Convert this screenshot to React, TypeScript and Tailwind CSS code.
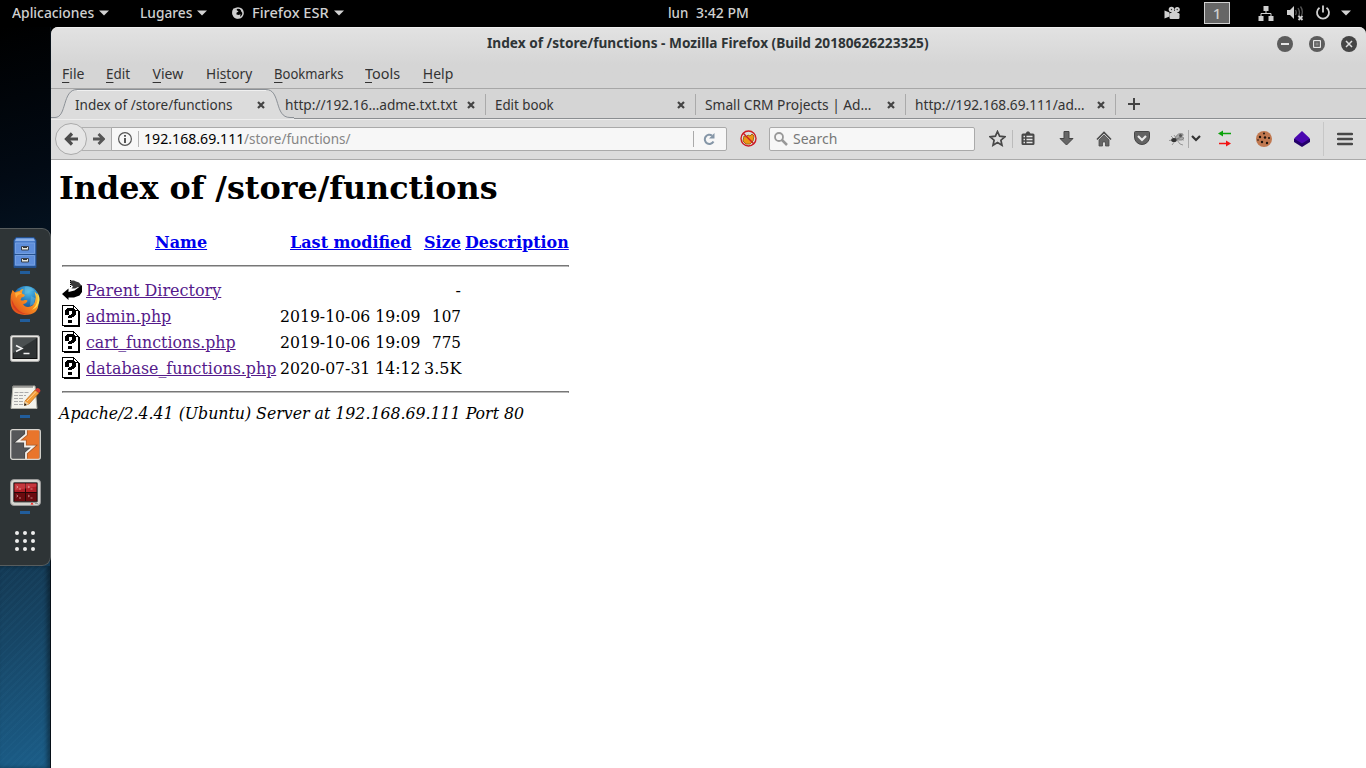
import { useLayoutEffect, useRef, useState } from "react";
import type { ReactNode } from "react";

/* A label condensed or widened to an exact advance width. */
function Label({ w, className = "", children }: { w: number; className?: string; children: ReactNode }) {
  const ref = useRef<HTMLSpanElement>(null);
  const [scale, setScale] = useState(1);
  useLayoutEffect(() => {
    if (ref.current) setScale(w / ref.current.offsetWidth);
  }, [w]);
  return (
    <span className="block shrink-0 whitespace-pre" style={{ width: w }}>
      <span ref={ref} className={`inline-block origin-left ${className}`} style={{ transform: `scaleX(${scale})` }}>
        {children}
      </span>
    </span>
  );
}

const Caret = () => (
  <svg width="10" height="6" viewBox="0 0 10 6" className="shrink-0">
    <path d="M0 .5h10L5 5.5z" fill="#d3d3d3" />
  </svg>
);

function TopBar() {
  return (
    <header className="flex h-[27px] shrink-0 items-center bg-black pb-px pl-3 text-[14px] leading-[20px] font-medium text-[#d0d0d0]">
      <Label w={82}>Aplicaciones</Label>
      <span className="ml-[5px]"><Caret /></span>
      <span className="ml-[31px]"><Label w={52}>Lugares</Label></span>
      <span className="ml-[5px]"><Caret /></span>
      <svg className="ml-[25px] shrink-0" width="12" height="12" viewBox="0 0 12 12">
        <circle cx="6" cy="6" r="5.1" fill="none" stroke="#d0d0d0" strokeWidth="1.5" />
        <path d="M.6 3 2 1l1 1.500L5.500 1 4.500 3l2 1.500-2 1.300v1.700l2.500.5 1.500-1L8 10 6 11.500C1 11.500 0 7 .6 3zM8 1l2.500 2 .5 3-1.500-1z" fill="#d0d0d0" />
      </svg>
      <span className="ml-2"><Label w={77}>Firefox ESR</Label></span>
      <span className="ml-[5px]"><Caret /></span>
      <span className="ml-[324px]"><Label w={20}>lun</Label></span>
      <span className="ml-2"><Label w={53}>3:42 PM</Label></span>
      <svg className="ml-[415px] shrink-0" width="17" height="14" viewBox="0 0 17 14">
        <g fill="#d0d0d0">
          <circle cx="7.5" cy="3.5" r="2.8" /><circle cx="13.2" cy="3.5" r="2.6" />
          <rect x="5.5" y="7" width="10" height="6" rx="1.2" /><path d="M7.500 5h6v3h-6zM.5 4.500v8L5.500 10.500v-4z" />
        </g>
        <g fill="#333"><circle cx="7.5" cy="3.5" r=".7" /><circle cx="13.2" cy="3.5" r=".7" /></g>
      </svg>
      <div className="ml-[23px] flex h-[22px] w-[26px] items-center justify-center border border-[#d0d0d0] bg-[#666]">
        <span className="text-[15px]">1</span>
      </div>
      <svg className="ml-7 shrink-0" width="16" height="16" viewBox="0 0 16 16">
        <path d="M5.5 1h5v5h-5zM.5 11h5v5h-5zM10.5 11h5v5h-5z" fill="#d0d0d0" />
        <path d="M8 6v2.5M3 11V8.5h10V11" fill="none" stroke="#d0d0d0" />
      </svg>
      <svg className="ml-3 shrink-0" width="18" height="16" viewBox="0 0 18 16">
        <path d="M1 5h3l4-4v13L4 10H1z" fill="#d0d0d0" />
        <path d="M9.5 5q1.5 2.5 0 5M12 3q3 4.500 0 9M14.500 1.500q3 4 1 9" fill="none" stroke="#555" strokeWidth="1.3" />
        <path d="m12.500 11 4 4m0-4-4 4" stroke="#d0d0d0" strokeWidth="1.8" />
      </svg>
      <svg className="ml-[11px] shrink-0" width="16" height="16" viewBox="0 0 16 16">
        <path d="M4.500 2.800a6 6 0 1 0 7 0" fill="none" stroke="#d0d0d0" strokeWidth="1.800" />
        <path d="M8 .5v7" stroke="#d0d0d0" strokeWidth="1.800" />
      </svg>
      <span className="ml-[10px]"><Caret /></span>
    </header>
  );
}

function Cabinet() {
  return (
    <svg width="24" height="31" viewBox="0 0 24 31">
      <path d="M3 .5h18l2 3v27H1v-27z" fill="#4a7cc9" stroke="#234f8c" />
      <path d="M3.500 1.500h17l1.500 2.500H2z" fill="#8ab0e8" />
      <path d="M2.500 6h19v10.500h-19zM2.500 18.500h19V28h-19z" fill="#5e8edb" stroke="#88aee9" strokeWidth=".6" />
      <path d="M1 17.500h22M1 29.500h22" stroke="#26528f" />
      <path d="M8.500 9.500h7v3.500h-7zM8.500 21.500h7V25h-7z" fill="#e6e6de" stroke="#38404c" />
      <path d="M10 10.500h4M10 22.500h4" stroke="#333" />
    </svg>
  );
}

function Firefox() {
  return (
    <svg width="31" height="31" viewBox="0 0 31 31">
      <defs>
        <radialGradient id="globe" cx=".6" cy=".2" r=".8"><stop stopColor="#53c2ee" /><stop offset=".5" stopColor="#2377b8" /><stop offset="1" stopColor="#12336e" /></radialGradient>
        <linearGradient id="fur" x1="1" y1="0" x2="0" y2="1"><stop stopColor="#ffe14d" /><stop offset=".45" stopColor="#f58a20" /><stop offset="1" stopColor="#d9401c" /></linearGradient>
      </defs>
      <circle cx="16" cy="14.500" r="13.500" fill="url(#globe)" />
      <path d="M15 2q6-1 9 4-4-1-5 2l-4 1zM21 11l4 2-1 6-4 2z" fill="#64b8db" opacity=".55" />
      <path d="M2.500 5 5 7.500q2-1.500 4.500-1.500Q11 4 13.500 4q-2 2-1.500 4.500l3 1.500q-.5 2-3.500 2.500l-1 2.500q2 1 4 0 3-.5 3 1-1.500 3-4.500 3 1.500 3 5 3 5.500-.5 7-5.500 1.500-5-.5-10 5 4 4 11Q29 30 14.500 30 0 29 .5 15q0-6 2-10z" fill="url(#fur)" />
      <path d="M1.500 14q0 9 7 13 5 3 11 2-8 0-12-5-4-4-6-10z" fill="#d93e20" />
      <path d="m5 8 4-1 3 1.500-4 1.500-2 3z" fill="#ffad3b" />
      <path d="M27 8q3 10-5 17 7-3 7.500-10 0-5-2.500-7z" fill="#ffdf50" />
    </svg>
  );
}

function Terminal() {
  return (
    <svg width="30" height="27" viewBox="0 0 30 27">
      <rect x=".5" y=".5" width="29" height="26" rx="2" fill="#e8e8e4" stroke="#aaa" />
      <rect x="3" y="3" width="24" height="20.500" fill="#2f3334" stroke="#111" />
      <path d="M3 3h24L3 18z" fill="#4b5051" />
      <path d="m6 10.500 6 3-6 3M13.500 18.500h6" fill="none" stroke="#f2f2f2" strokeWidth="1.500" />
    </svg>
  );
}

function Notes() {
  return (
    <svg width="31" height="26" viewBox="0 0 31 26">
      <path d="M3 2h22l2 22.500H1z" fill="#f3f3ec" stroke="#b0b0a8" />
      <path d="M4 1v3m2-3v3m2-3v3m2-3v3m2-3v3m2-3v3m2-3v3m2-3v3m2-3v3m2-3v3" stroke="#555" strokeWidth=".9" />
      <path d="M4.500 8.500h14M4 11.500h12M4 14.500h10M4 17.500h9M4 20.500h15" stroke="#aaa" strokeDasharray="4 1" />
      <path d="m15 17 10-11 4 3-10 11-4.500 1.500z" fill="#f39c35" stroke="#b66516" strokeWidth=".7" />
      <path d="m25 6 2-2q3 0 3.500 3L29 9z" fill="#d43e34" />
      <path d="m15 17-.8 4.700L19 20z" fill="#edcfa0" /><path d="m14.700 19-.6 2.800 2.600-.9z" fill="#111" />
      <path d="m17 17 9-9.500" stroke="#ffd09a" />
    </svg>
  );
}

function Burp() {
  return (
    <svg width="31" height="31" viewBox="0 0 31 31">
      <rect x=".7" y=".7" width="29.600" height="29.600" rx="2" fill="#555659" />
      <path d="M16 1h13.500v29H16v-6l7.500-6.500H15V12H7.500L16 5.500z" fill="#e9752b" />
      <path d="M16 1v4.500L7.500 12.500h7.500v5h8.500L16 24v6" fill="none" stroke="#222" strokeWidth="3.400" opacity=".35" />
      <path d="M16 1v4.500L7.500 12.500h7.500v5h8.500L16 24v6" fill="none" stroke="#f4f0ec" strokeWidth="1.800" />
      <rect x=".7" y=".7" width="29.600" height="29.600" rx="2" fill="none" stroke="#d8d5d0" strokeWidth="1.300" />
    </svg>
  );
}

function Terminator() {
  return (
    <svg width="31" height="27" viewBox="0 0 31 27">
      <rect x=".5" y=".5" width="30" height="26" rx="3.500" fill="#d6d6d0" stroke="#999" />
      <rect x="3.500" y="3.500" width="24" height="19.500" rx="1" fill="#260707" stroke="#555" />
      <path d="M4.500 4.500H15V13H4.500zM16 4.500h10.500V13H16z" fill="#b01f26" />
      <path d="M4.500 14H15v8H4.500zM16 14h10.500v8H16z" fill="#6b0a0e" />
      <path d="M4.500 4.500h22v3l-22 4z" fill="#e0555a" opacity=".45" />
      <path d="m6.500 7 1.500 1-1.500 1m2.500 1h2m7-3 1.500 1-1.500 1m2.500 1h2M6.500 16 8 17l-1.500 1M9 19h2m7-3 1.500 1-1.500 1m2.500 1h2" fill="none" stroke="#f3c9c9" strokeWidth=".6" />
      <path d="m20.500 25.500 1.500-2 1.500 2z" fill="#f00" /><path d="M25 24.500h3" stroke="#999" />
    </svg>
  );
}

const dock = [
  { icon: <Cabinet />, running: true },
  { icon: <Firefox />, running: true },
  { icon: <Terminal />, running: false },
  { icon: <Notes />, running: true },
  { icon: <Burp />, running: false },
  { icon: <Terminator />, running: true },
];

function Dock() {
  return (
    <aside className="flex w-[51px] shrink-0 flex-col border-r border-[#071018] bg-[linear-gradient(165deg,#000_0%,#020a14_20%,#08233a_50%,#153d59_75%,#1b5d88_100%)] pt-[201px]">
      <nav className="flex h-[338px] w-[51px] flex-col rounded-r-[9px] border border-l-0 border-[#585d5e] bg-[#2e3436]">
        {dock.map(({ icon, running }, i) => (
          <div key={i} className="flex h-12 shrink-0 flex-col items-center">
            <div className="flex h-[43px] items-center justify-center pt-[4px]">{icon}</div>
            {running && <div className="-mt-px h-[3px] w-[10px] bg-[#215d9c]" />}
          </div>
        ))}
        <div className="mt-[14px] grid grid-cols-3 gap-[4px] self-center">
          {Array.from({ length: 9 }, (_, i) => <div key={i} className="size-1 rounded-full bg-[#eee]" />)}
        </div>
      </nav>
      <div className="min-h-0 flex-1 bg-[repeating-linear-gradient(135deg,transparent_0_3px,rgba(70,150,190,.05)_3px_5px)] shadow-[inset_-3px_0_4px_rgba(0,0,0,.4)]" />
    </aside>
  );
}

function TitleBar() {
  return (
    <div className="flex h-[31px] items-center">
      <div className="-mt-px ml-[436px] font-bold text-[#2e3436]"><Label w={442}>Index of /store/functions - Mozilla Firefox (Build 20180626223325)</Label></div>
      <div className="ml-auto flex gap-4 pr-[9px]">
        <svg width="16" height="16"><circle cx="8" cy="8" r="8" fill="#5c5c5c" /><path d="M4 8h8" stroke="#e5e5e5" strokeWidth="2" /></svg>
        <svg width="16" height="16"><circle cx="8" cy="8" r="8" fill="#5c5c5c" /><path d="M4.500 4.500h7v7h-7z" fill="#858585" stroke="#e5e5e5" /><path d="M6 6h4v4H6z" fill="none" stroke="#5c5c5c" /></svg>
        <svg width="16" height="16"><circle cx="8" cy="8" r="8" fill="#454545" /><path d="m5 5 6 6m0-6-6 6" stroke="#ddd" strokeWidth="1.500" /></svg>
      </div>
    </div>
  );
}

const menus: { pre?: string; key: string; rest: string; w: number }[] = [
  { key: "F", rest: "ile", w: 22 },
  { key: "E", rest: "dit", w: 24 },
  { key: "V", rest: "iew", w: 31 },
  { pre: "Hi", key: "s", rest: "tory", w: 46 },
  { key: "B", rest: "ookmarks", w: 69 },
  { key: "T", rest: "ools", w: 35 },
  { key: "H", rest: "elp", w: 31 },
];

function MenuBar() {
  return (
    <div className="flex h-[30px] items-center gap-[22.300px] border-b border-[#a7a7a7] pl-[11px]">
      {menus.map((m) => (
        <Label key={m.key} w={m.w}>
          {m.pre}<span className="underline decoration-1 underline-offset-[3px]">{m.key}</span>{m.rest}
        </Label>
      ))}
    </div>
  );
}

const Close = () => (
  <svg width="8" height="8" viewBox="0 0 8 8" className="shrink-0">
    <path d="m1 1 6 6m0-6-6 6" stroke="#444" strokeWidth="2.200" />
  </svg>
);

const tabs = [
  { title: "http://192.16…adme.txt.txt", w: 172 },
  { title: "Edit book", w: 59 },
  { title: "Small CRM Projects | Ad…", w: 166 },
  { title: "http://192.168.69.111/ad…", w: 170 },
];

function TabStrip() {
  return (
    <div className="flex h-[30px] items-center border-b border-[#8b8e91] bg-[#d5d5d5] pt-px">
      <div className="relative z-10 flex h-[30px] w-[225px] shrink-0 items-center pr-[11px] pl-6">
        <svg className="absolute -top-px left-0" width="243" height="31" viewBox="0 0 243 31">
          <path d="M0 29.500h4c12 0 7-28 22-28h189c15 0 8 28 24 28h4V31H0z" fill="#dcdcdc" />
          <path d="M0 29.500h4c12 0 7-28 22-28h189c15 0 8 28 24 28h4" fill="none" stroke="#8b9096" />
          <path d="M26 2.500h189" stroke="#f0f0f0" />
        </svg>
        <div className="relative flex w-full items-center justify-between pt-px"><Label w={157.500}>Index of /store/functions</Label><Close /></div>
      </div>
      {tabs.map((t) => (
        <div key={t.title} className="flex h-[21px] w-[210px] shrink-0 items-center justify-between border-r border-[#aaa] pt-px pr-[10px] pl-[9px]">
          <Label w={t.w}>{t.title}</Label><Close />
        </div>
      ))}
      <svg className="ml-3 shrink-0" width="12" height="12"><path d="M6 0v12M0 6h12" stroke="#444" strokeWidth="2" /></svg>
    </div>
  );
}

const Slot = ({ children, className = "w-[38px]" }: { children: ReactNode; className?: string }) => (
  <div className={`flex shrink-0 items-center justify-center ${className}`}>{children}</div>
);

function Toolbar() {
  return (
    <div className="flex h-[41px] items-center border-t border-b border-t-[#ededed] border-b-[#aaa] bg-[#dcdcdc] pb-[2px]">
      <div className="relative z-10 ml-1 flex size-8 shrink-0 items-center justify-center rounded-full border border-[#aaa] bg-[#e6e6e6]">
        <svg width="14" height="14" viewBox="0 0 14 14"><path d="M14 7H3M8 1.500 2.500 7 8 12.500" fill="none" stroke="#4c4c4c" strokeWidth="3.200" /></svg>
      </div>
      <div className="-ml-[5px] flex h-6 w-[30px] shrink-0 items-center justify-end border-y border-[#b0b0b0] bg-[#e0e0e0] pr-[7px]">
        <svg width="12" height="12" viewBox="0 0 12 12"><path d="M0 6h10M5.500 1l5 5-5 5" fill="none" stroke="#555" strokeWidth="2.800" /></svg>
      </div>
      <div className="-ml-px flex h-6 w-[616px] shrink-0 items-center rounded-r-[2px] border border-[#aaa] bg-[#f7f7f7] pl-[6px]">
        <svg width="14" height="14" viewBox="0 0 14 14"><circle cx="7" cy="7" r="6.400" fill="none" stroke="#555" strokeWidth="1.200" /><path d="M7 3v1.700M7 6v5" stroke="#444" strokeWidth="1.800" /></svg>
        <div className="ml-[6px] h-4 w-px bg-[#b5b5b5]" />
        <span className="ml-[5px] flex text-black"><Label w={100}>192.168.69.111</Label><Label w={107} className="text-[#858585]">/store/functions/</Label></span>
        <div className="ml-auto h-4 w-px bg-[#aaa]" />
        <svg className="mr-[11px] ml-[9px]" width="12" height="12" viewBox="0 0 12 12"><path d="M10.500 8.500A4.600 4.600 0 1 1 9 2.500" fill="none" stroke="#8596a7" strokeWidth="2" /><path d="M11.500 0v5.500H6z" fill="#8596a7" /></svg>
      </div>
      <Slot className="w-[42px]">
        <svg width="17" height="17" viewBox="0 0 17 17">
          <path d="m4 6 2 1 2-2 2 1 2-2 2 2-1 5-3 3H6l-3-3z" fill="#ed9715" stroke="#a46a12" />
          <circle cx="8.500" cy="8.500" r="7.500" fill="none" stroke="#cd1c24" strokeWidth="1.400" /><path d="m3 3 11 11" stroke="#cd1c24" strokeWidth="1.400" />
        </svg>
      </Slot>
      <div className="flex h-6 w-[206px] shrink-0 items-center rounded-[2px] border border-[#aaa] bg-[#f7f7f7] pl-1 text-[#777]">
        <svg className="mr-[5px]" width="14" height="14" viewBox="0 0 14 14"><circle cx="5" cy="5" r="4" fill="none" stroke="#999" strokeWidth="1.800" /><path d="m8 8 5 5" stroke="#999" strokeWidth="2.500" /></svg>
        <Label w={44}>Search</Label>
      </div>
      <Slot className="ml-[7px] w-[30px]">
        <svg width="17" height="17" viewBox="0 0 17 17"><path d="m8.500 1.500 2.100 4.700 5.200.6-3.900 3.400 1.100 5-4.500-2.600L4 15.200l1.100-5-3.900-3.400 5.200-.6z" fill="none" stroke="#484848" strokeWidth="1.700" /></svg>
      </Slot>
      <div className="h-[18px] w-px bg-[#bbb]" />
      <Slot className="w-[30px]">
        <svg width="14" height="15" viewBox="0 0 14 15"><path d="M2 2.500h2.500L6 .5h2l1.500 2H12q1.500 0 1.500 1.500v8.500q0 1.500-1.500 1.500H2q-1.500 0-1.500-1.500V4Q.5 2.500 2 2.500z" fill="#484848" /><path d="M2.500 5.500H4m1.500 0h6M2.500 8.500H4m1.500 0h6M2.500 11.500H4m1.500 0h6" stroke="#e5e5e5" strokeWidth="1.500" /></svg>
      </Slot>
      <Slot className="ml-[4px] w-[38px]">
        <svg width="15" height="15" viewBox="0 0 15 15"><path d="M5 .5h5v7h4L7.500 14 1 7.500h4z" fill="#666" stroke="#444" /></svg>
      </Slot>
      <Slot>
        <svg width="16" height="16" viewBox="0 0 16 16"><path d="m1 8.500 7-7 7 7" fill="none" stroke="#4b4b4b" strokeWidth="1.700" /><path d="m3 9 5-5 5 5v6H9.500v-4h-3v4H3z" fill="#666" stroke="#4b4b4b" strokeWidth=".8" /></svg>
      </Slot>
      <Slot>
        <svg width="16" height="15" viewBox="0 0 16 15"><path d="M1.500.5h13q1 0 1 1V6a7.500 7.500 0 0 1-15 0V1.500q0-1 1-1z" fill="#626262" stroke="#464646" /><path d="m4 5 4 4 4-4" fill="none" stroke="#e9e9e9" strokeWidth="2.200" /></svg>
      </Slot>
      <Slot className="ml-2 w-[16px]">
        <svg width="16" height="14" viewBox="0 0 16 14">
          <path d="M5 7 2 4M5 8 0 8.500M6 9l-3 4M8 8l3 4 3 1M9 7l6 1M7 6 5 3" fill="none" stroke="#777" strokeWidth=".7" />
          <path d="M6 6Q9 0 14 2q1 3-7 5zM8 7q5-3 7-1-1 3-6 2z" fill="#aaa" stroke="#777" strokeWidth=".7" />
          <ellipse cx="5" cy="8" rx="2.800" ry="2" fill="#333" /><circle cx="11.500" cy="3.500" r="1.500" fill="#555" />
        </svg>
      </Slot>
      <div className="ml-[3px] h-[18px] w-px bg-[#aaa]" />
      <Slot className="ml-px w-3"><svg width="10" height="7"><path d="m1 1 4 4 4-4" fill="none" stroke="#333" strokeWidth="2.200" /></svg></Slot>
      <Slot className="ml-[4px] w-[38px]">
        <svg width="14" height="17" viewBox="0 0 14 17"><path d="M4 3.500h9" stroke="#0aa20a" strokeWidth="1.500" /><path d="M5 .5v6l-5-3z" fill="#0aa20a" /><path d="M1 13.500h9" stroke="#f21313" strokeWidth="1.500" /><path d="M8 10.500v6l5-3z" fill="#f21313" /></svg>
      </Slot>
      <Slot className="ml-px w-[38px]">
        <svg width="16" height="16" viewBox="0 0 16 16"><circle cx="8" cy="8" r="8" fill="#c07850" /><g fill="#1d120c"><circle cx="8" cy="2.500" r="1" /><circle cx="4" cy="6" r="1.200" /><circle cx="9" cy="6.500" r="1.200" /><circle cx="13" cy="7" r="1" /><circle cx="6" cy="11" r="1.200" /><circle cx="11" cy="12" r="1.200" /><circle cx="2" cy="9" r=".8" /></g></svg>
      </Slot>
      <Slot>
        <svg width="16" height="16" viewBox="0 0 16 16"><path d="M0 8v3l8 5 8-5V8z" fill="#240069" /><path d="m0 7.500 8-7.500 8 7.500-8 5z" fill="#4a06b0" /></svg>
      </Slot>
      <div className="ml-[2px] h-[34px] w-px bg-[#c7c7c7]" />
      <Slot className="w-[42px]">
        <svg width="16" height="14" viewBox="0 0 16 14"><path d="M1 2h14M1 7h14M1 12h14" stroke="#484848" strokeWidth="2.500" strokeLinecap="round" /></svg>
      </Slot>
    </div>
  );
}

const BackIcon = () => (
  <svg className="block" width="20" height="22" viewBox="0 0 20 22">
    <path d="M8 1.500h4l2 1 3 1 2 2.500v3l-3-1-3 1.500H9.500l1.500-2-2-1.500z" fill="#3a3a3a" />
    <path d="M8.500 1v7" stroke="#000" strokeDasharray="1 1" />
    <path d="M20 6v7l-2.500 3.500L12 18.500H6.500V21L0 15l6.500-5.500v3.500l6-1.500z" fill="#000" />
  </svg>
);

const UnknownIcon = () => (
  <svg className="block" width="20" height="22" viewBox="0 0 20 22" shapeRendering="crispEdges">
    <path d="M.5.5h11l5 5v15H.5z" fill="#fff" stroke="#000" />
    <path d="M11.500.5v5h5M17.500 6v15.500H2" fill="none" stroke="#000" />
    <path d="M3 5h1V4h1V3h7v1h1v1h1v5h-1v1h-1v1h-2v1H6v-2h1v-1h2V9h1V6H7v4H3zM6 15h4v3H6z" fill="#000" />
  </svg>
);

const files = [
  { name: "admin.php", w: 85, date: "2019-10-06 19:09", size: "107", sizeW: 29.500 },
  { name: "cart_functions.php", w: 150, date: "2019-10-06 19:09", size: "775", sizeW: 29.500 },
  { name: "database_functions.php", w: 190, date: "2020-07-31 14:12", size: "3.5K", sizeW: 37 },
];

const Rule = () => (
  <tr><td colSpan={5} className="p-px"><hr className="my-2 h-[2px] border border-[#777] border-b-[#bbb]" /></td></tr>
);

function Listing() {
  return (
    <main className="min-h-0 flex-1 bg-white pt-[10px] pl-2 font-['DejaVu_Serif',serif] text-[16px] leading-[19px] text-black">
      <h1 className="h-[58px] text-[32px] leading-[37px] font-bold"><Label w={439}>Index of /store/functions</Label></h1>
      <table className="w-[513px] table-fixed border-separate border-spacing-[2px]">
        <colgroup>
          <col className="w-[22px]" /><col className="w-[192px]" /><col className="w-[142px]" /><col className="w-[39px]" /><col className="w-[106px]" />
        </colgroup>
        <tbody className="whitespace-nowrap">
          <tr className="h-6 text-left text-[#0000ee] underline">
            <th className="p-px" />
            <th className="p-px pl-[70px]"><Label w={52} className="underline">Name</Label></th>
            <th className="p-px pl-[11px]"><Label w={121} className="underline">Last modified</Label></th>
            <th className="p-px"><Label w={37} className="underline">Size</Label></th>
            <th className="p-px"><Label w={103.500} className="underline">Description</Label></th>
          </tr>
          <Rule />
          <tr className="h-6">
            <td className="p-px"><BackIcon /></td>
            <td className="p-px text-[#551a8b] underline"><Label w={135} className="underline">Parent Directory</Label></td><td />
            <td className="p-px text-right">-</td><td />
          </tr>
          {files.map((f) => (
            <tr key={f.name} className="h-6">
              <td className="p-px"><UnknownIcon /></td>
              <td className="p-px text-[#551a8b]"><Label w={f.w} className="underline">{f.name}</Label></td>
              <td className="p-px"><Label w={140}>{f.date}</Label></td>
              <td className="p-px"><div className="flex justify-end"><Label w={f.sizeW}>{f.size}</Label></div></td><td />
            </tr>
          ))}
          <Rule />
        </tbody>
      </table>
      <address className="italic"><Label w={465}>Apache/2.4.41 (Ubuntu) Server at 192.168.69.111 Port 80</Label></address>
    </main>
  );
}

export default function App() {
  return (
    <div className="flex h-[768px] w-[1366px] flex-col overflow-hidden bg-black font-['Noto_Sans',sans-serif] text-[14px] leading-[20px] text-[#333]">
      <TopBar />
      <div className="flex min-h-0 flex-1">
        <Dock />
        <section className="flex min-w-0 flex-1 flex-col overflow-hidden rounded-t-[7px] bg-[#d5d5d5]">
          <div className="h-[62px] shrink-0 border-t border-[#f0f0f0] bg-linear-to-b from-[#e2e2e2] to-[#d5d5d5] to-60%">
            <TitleBar />
            <MenuBar />
          </div>
          <TabStrip />
          <Toolbar />
          <Listing />
        </section>
      </div>
    </div>
  );
}
